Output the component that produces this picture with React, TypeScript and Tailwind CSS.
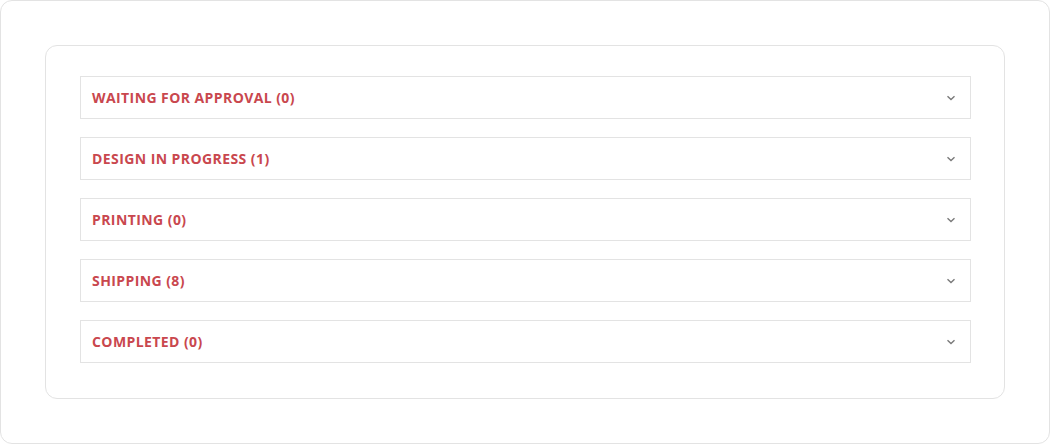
import React from "react";

const items = [
  "WAITING FOR APPROVAL (0)",
  "DESIGN IN PROGRESS (1)",
  "PRINTING (0)",
  "SHIPPING (8)",
  "COMPLETED (0)",
];

function Chevron() {
  return (
    <svg width="10" height="6" viewBox="0 0 10 6" className="text-[#7a7a7a]">
      <path d="M1.5 1.2 L5 4.5 L8.5 1.2" fill="none" stroke="currentColor" strokeWidth="1.4" />
    </svg>
  );
}

export default function App() {
  return (
    <div className="w-[1050px] h-[444px] bg-white" style={{ fontFamily: '"Open Sans", "Liberation Sans", sans-serif' }}>
      <div className="w-full h-full border border-[#e3e3e3] rounded-[12px] pt-[44px] pl-[44px]">
        <div className="w-[960px] h-[354px] border border-[#e3e3e3] rounded-[12px] pt-[30px] pl-[34px] pr-[33px] flex flex-col gap-[18px]">
          {items.map((t) => (
            <div key={t} className="h-[43px] border border-[#e3e3e3] flex items-center justify-between pl-[11px] pr-[14px]">
              <span className="text-[14px] font-bold text-[#c9474e] tracking-[0.42px]">{t}</span>
              <Chevron />
            </div>
          ))}
        </div>
      </div>
    </div>
  );
}
